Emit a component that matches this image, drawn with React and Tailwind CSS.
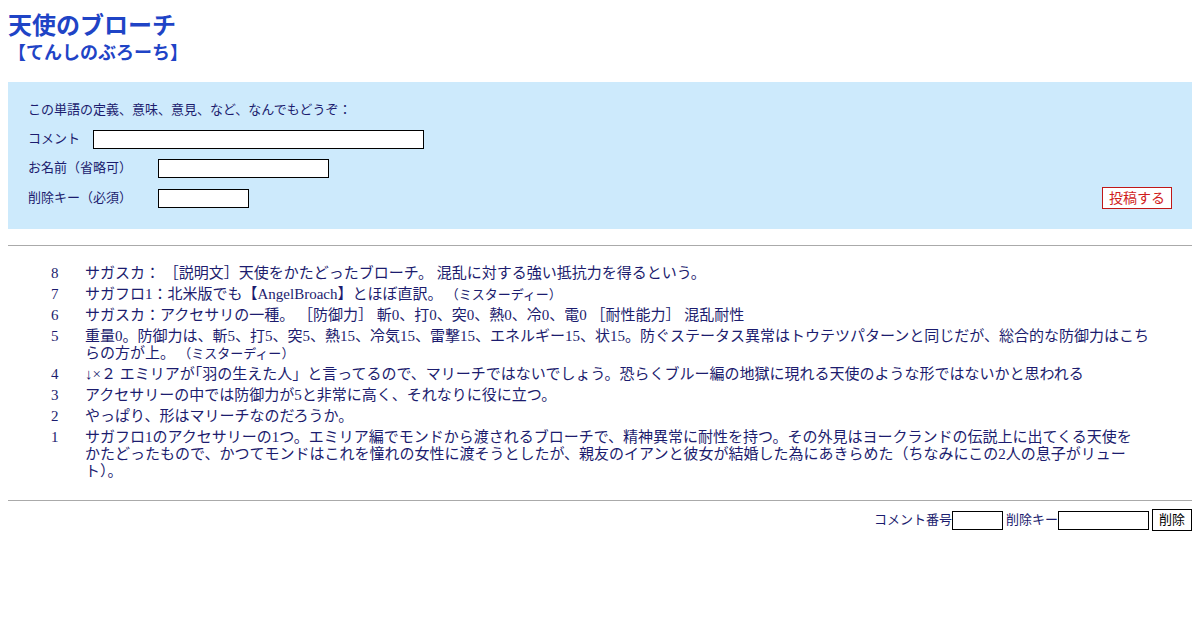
const jp = { fontFamily: '"Liberation Serif", "Noto Sans CJK JP", serif' }
const ui = { fontFamily: '"Liberation Sans", "Noto Sans CJK JP", sans-serif' }

const entries = [
  { n: 8, t: ['サガスカ： ［説明文］天使をかたどったブローチ。 混乱に対する強い抵抗力を得るという。'] },
  { n: 7, t: ['サガフロ1：北米版でも【AngelBroach】とほぼ直訳。'], by: 'ミスターディー' },
  { n: 6, t: ['サガスカ：アクセサリの一種。 ［防御力］ 斬0、打0、突0、熱0、冷0、電0 ［耐性能力］ 混乱耐性'] },
  { n: 5, t: ['重量0。防御力は、斬5、打5、突5、熱15、冷気15、雷撃15、エネルギー15、状15。防ぐステータス異常はトウテツパターンと同じだが、総合的な防御力はこち', 'らの方が上。'], by: 'ミスターディー' },
  { n: 4, t: ['↓×２ エミリアが｢羽の生えた人」と言ってるので、マリーチではないでしょう。恐らくブルー編の地獄に現れる天使のような形ではないかと思われる'] },
  { n: 3, t: ['アクセサリーの中では防御力が5と非常に高く、それなりに役に立つ。'] },
  { n: 2, t: ['やっぱり、形はマリーチなのだろうか。'] },
  { n: 1, t: ['サガフロ1のアクセサリーの1つ。エミリア編でモンドから渡されるブローチで、精神異常に耐性を持つ。その外見はヨークランドの伝説上に出てくる天使を', 'かたどったもので、かつてモンドはこれを憧れの女性に渡そうとしたが、親友のイアンと彼女が結婚した為にあきらめた（ちなみにこの2人の息子がリュー', 'ト）。'] },
]

export default function App() {
  return (
    <div className="w-[1200px] h-[630px] bg-white px-2 pt-[11px] text-[#1c1c6e]" style={ui}>
      <h1 className="text-[24px] leading-[30px] font-bold text-[#1f44c6]">天使のブローチ</h1>
      <div className="text-[18px] leading-[24px] font-bold text-[#1f44c6]">【てんしのぶろーち】</div>

      <div className="mt-[17px] bg-[#cdeafc] px-5 pt-[19px] pb-[21px] text-[13px]">
        <div className="leading-[18px]">この単語の定義、意味、意見、など、なんでもどうぞ：</div>
        <div className="mt-[10px] flex items-center h-[20px]">
          <span className="w-[65px]">コメント</span>
          <input className="w-[331px] h-[19px] bg-white border border-black" />
        </div>
        <div className="mt-[9px] flex items-center h-[20px]">
          <span className="w-[130px]">お名前（省略可）</span>
          <input className="w-[171px] h-[19px] bg-white border border-black" />
        </div>
        <div className="mt-[10px] flex items-center justify-between h-[20px]">
          <div className="flex items-center">
            <span className="w-[130px]">削除キー（必須）</span>
            <input className="w-[91px] h-[19px] bg-white border border-black" />
          </div>
          <button className="h-[22px] px-[6px] bg-white border border-[#c01818] text-[#d01c1c] text-[14px] leading-[20px]">投稿する</button>
        </div>
      </div>

      <hr className="mt-[16px] border-0 border-t border-[#aaaaaa]" />

      <div className="pt-[19px] pl-[43px] text-[15px]" style={jp}>
        {entries.map((e) => (
          <div key={e.n} className="flex mb-[4px] leading-[17px]">
            <div className="w-[34px] shrink-0">{e.n}</div>
            <div className="w-[1070px]">
              {e.t.map((line, i) => (
                <span key={i}>
                  {i > 0 && <br />}
                  {line}
                </span>
              ))}
              {e.by && <span className="text-[13px]">{' '}（{e.by}）</span>}
            </div>
          </div>
        ))}
      </div>

      <hr className="mt-[20px] border-0 border-t border-[#aaaaaa]" />

      <div className="mt-[8px] flex justify-end items-center text-[13px]">
        <span>コメント番号</span>
        <input className="w-[51px] h-[19px] bg-white border border-black" />
        <span className="ml-[3px]">削除キー</span>
        <input className="w-[91px] h-[19px] bg-white border border-black" />
        <button className="ml-[3px] h-[22px] px-[6px] bg-white border border-black text-black text-[13px]">削除</button>
      </div>
    </div>
  )
}
